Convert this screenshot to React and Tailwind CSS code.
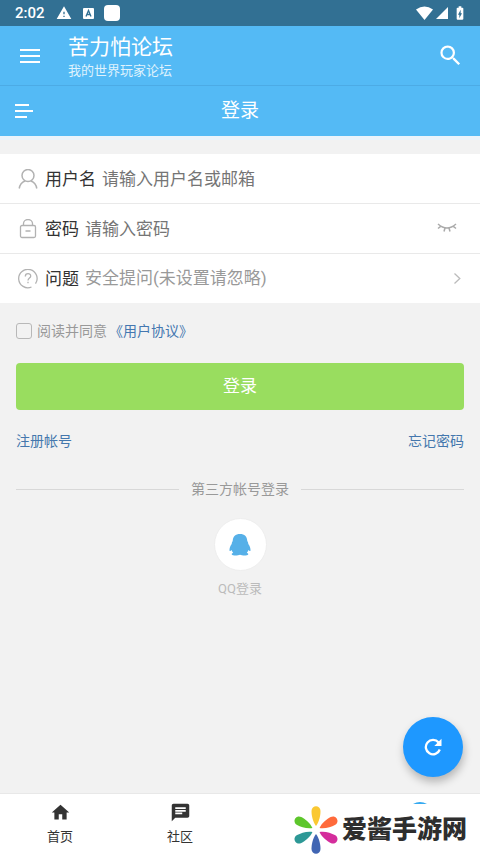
import React from "react";
import {
  MdWarning,
  MdSearch,
  MdHome,
  MdChat,
  MdBatteryChargingFull,
} from "react-icons/md";

function StatusBar() {
  return (
    <div className="flex h-[26px] items-center justify-between bg-[#327093] pr-3 pl-[15px] text-white">
      <div className="flex items-center">
        <span className="font-[Roboto,sans-serif] text-[15px] leading-6 font-medium">2:02</span>
        <MdWarning className="ml-[11px] size-4" />
        <svg className="ml-[11px] size-[11px]" viewBox="0 0 11 11" aria-hidden="true">
          <rect width="11" height="11" rx="1" fill="#fff" />
          <path d="M3 8.5 5.5 2.5 8 8.5M4 6.5H7" fill="none" stroke="#327093" strokeWidth="1.3" />
        </svg>
        <span className="ml-[10px] size-4 rounded-[4px] bg-white" />
      </div>
      <div className="flex items-center">
        <svg className="h-[14px] w-[17px]" viewBox="0 0 17 14" fill="currentColor" aria-hidden="true">
          <path d="M0 3.5Q8.500-2.500 17 3.500L8.500 14Z" />
        </svg>
        <svg className="ml-[3px] size-3" viewBox="0 0 12 12" fill="currentColor" aria-hidden="true">
          <path d="M12 0V12H0Z" />
        </svg>
        <MdBatteryChargingFull className="ml-1 size-4" />
      </div>
    </div>
  );
}

function Header() {
  return (
    <header className="flex h-[60px] items-center border-b border-[#4cabe5] bg-[#54baf5] px-5 text-white">
      <button type="button" aria-label="菜单" className="w-5">
        <svg className="h-4 w-5" viewBox="0 0 20 16" stroke="currentColor" strokeWidth="2" aria-hidden="true">
          <path d="M0 2H20M0 8H20M0 14H20" />
        </svg>
      </button>
      <div className="ml-7 flex-1 pt-1">
        <h1 className="text-[21px] leading-[26px]">苦力怕论坛</h1>
        <p className="text-[13px] leading-[22px] text-[#dff2fd]">我的世界玩家论坛</p>
      </div>
      <button type="button" aria-label="搜索" className="-mr-1">
        <MdSearch className="size-[27px]" />
      </button>
    </header>
  );
}

function TitleBar() {
  return (
    <div className="grid h-[54px] grid-cols-[1fr_auto_1fr] items-center border-b-4 border-[#eaf3fb] bg-[#54baf5] px-[15px] text-white">
      <button type="button" aria-label="分类" className="w-[18px]">
        <svg className="h-[14px] w-[18px]" viewBox="0 0 18 14" stroke="currentColor" strokeWidth="2" aria-hidden="true">
          <path d="M0 1H14M0 7H18M0 13H12" />
        </svg>
      </button>
      <h2 className="text-[19px] leading-6">登录</h2>
    </div>
  );
}

function UserIcon() {
  return (
    <svg viewBox="0 0 20 20" className="size-5" fill="none" stroke="#b2b2b2" strokeWidth="1.500" aria-hidden="true">
      <ellipse cx="10" cy="6.500" rx="6" ry="6" />
      <path d="M1.200 19.500C1.800 16 4 13.200 7 12M18.800 19.500C18.200 16 16 13.200 13 12" />
    </svg>
  );
}

function LockIcon() {
  return (
    <svg viewBox="0 0 20 20" className="size-5" fill="none" stroke="#b2b2b2" strokeWidth="1.300" aria-hidden="true">
      <rect x="2.500" y="6.500" width="15" height="12" rx="1.500" />
      <path d="M5.500 6.500V4.500a4.500 4 0 0 1 9 0V6.500M7.500 12H12.500" />
    </svg>
  );
}

function QuestionIcon() {
  return (
    <svg viewBox="0 0 20 20" className="size-5" fill="none" stroke="#b2b2b2" strokeWidth="1.300" aria-hidden="true">
      <path d="M13.500 18A9.200 9.200 0 1 1 17.500 14.700" />
      <path d="M7.300 7.400C7.300 3.700 12.900 3.900 12.700 7.200C12.600 9 10 9.200 10 11.500M10 12.700V14.200" />
    </svg>
  );
}

function FormRow({ icon, label, htmlFor, children }) {
  return (
    <div className="flex h-[50px] items-center border-b border-[#e9e9e9] bg-white px-[18px] last:border-[#f2f2f2]">
      {icon}
      <label htmlFor={htmlFor} className="ml-[7px] shrink-0 text-[17px] leading-6 text-[#333]">
        {label}
      </label>
      {children}
    </div>
  );
}

function LoginForm() {
  return (
    <form onSubmit={(e) => e.preventDefault()}>
      <div className="mt-[14px]">
        <FormRow icon={<UserIcon />} label="用户名" htmlFor="username">
          <input
            id="username"
            type="text"
            placeholder="请输入用户名或邮箱"
            className="ml-1.5 h-8 min-w-0 flex-1 text-[17px] outline-none placeholder:text-[#757575]"
          />
        </FormRow>
        <FormRow icon={<LockIcon />} label="密码" htmlFor="password">
          <input
            id="password"
            type="password"
            placeholder="请输入密码"
            className="ml-1.5 h-8 min-w-0 flex-1 text-[17px] outline-none placeholder:text-[#757575]"
          />
          <button type="button" aria-label="显示密码" className="mr-[5px]">
            <svg viewBox="0 0 20 12" className="h-3 w-5" fill="none" stroke="#aaa" strokeWidth="1.500" aria-hidden="true">
              <path d="M1 1Q10 9 19 1M4 3.200 1 5.500M8 5 7 8.500M12 5 13 8.500M16 3.200 19 5.500" />
            </svg>
          </button>
        </FormRow>
        <FormRow icon={<QuestionIcon />} label="问题" htmlFor="question">
          <select
            id="question"
            className="ml-1.5 h-8 min-w-0 flex-1 appearance-none bg-transparent text-[17px] text-[#999] outline-none"
          >
            <option>安全提问(未设置请忽略)</option>
          </select>
          <svg viewBox="0 0 8 12" className="mr-px h-3 w-2" fill="none" stroke="#bbb" strokeWidth="1.300" aria-hidden="true">
            <path d="M1.500 .5 6.800 5.500 1.500 10.500" />
          </svg>
        </FormRow>
      </div>

      <div className="px-4">
        <div className="mt-4 flex h-[22px] items-center text-[14px] leading-[22px] text-[#999]">
          <input
            id="agree"
            type="checkbox"
            className="mr-[5px] size-4 appearance-none rounded-[3px] border border-[#b8b8b8] checked:bg-[#54baf5]"
          />
          <label htmlFor="agree">阅读并同意</label>
          <a href="#terms" className="ml-0.5 text-[#4477b0]">《用户协议》</a>
        </div>
        <button
          type="submit"
          className="mt-[21px] h-[47px] w-full rounded-[4px] bg-[#99dd5f] text-[17px] text-white"
        >
          登录
        </button>
        <div className="mt-5 flex justify-between text-[14px] leading-[22px] text-[#4477ad]">
          <a href="#register">注册帐号</a>
          <a href="#forgot">忘记密码</a>
        </div>
      </div>
    </form>
  );
}

function ThirdParty() {
  return (
    <section className="mt-[26px] flex flex-col items-center px-4">
      <div className="flex w-full items-center gap-3 text-[14px] leading-[22px] text-[#999]">
        <span className="h-px flex-1 bg-[#d8d8d8]" />
        <h3>第三方帐号登录</h3>
        <span className="h-px flex-1 bg-[#d8d8d8]" />
      </div>
      <a href="#qq" className="mt-[18px] flex flex-col items-center text-[13px] leading-5 text-[#bbb]">
        <span className="flex size-[53px] items-center justify-center rounded-full border border-[#eee] bg-white">
          <svg viewBox="0 0 22 22" className="size-[22px]" fill="#56b0e8" aria-hidden="true">
            <path d="M11 0C6.500 0 3.900 2.400 3.700 7C3 8 2.700 9 2.700 10C1.200 12 .3 14.500 .5 16.500C.8 17.600 1.700 17 2.600 16C2.900 17 3.400 17.900 4.200 18.700C3 19.200 2.500 19.900 2.800 20.500C3.500 22 9 21.800 11 20.800C13 21.800 18.500 22 19.200 20.500C19.500 19.900 19 19.200 17.800 18.700C18.600 17.900 19.100 17 19.400 16C20.300 17 21.200 17.600 21.500 16.500C21.700 14.500 20.800 12 19.300 10C19.300 9 19 8 18.300 7C18.100 2.400 15.500 0 11 0Z" />
          </svg>
        </span>
        <span className="mt-2">QQ登录</span>
      </a>
    </section>
  );
}

const PETAL = "M22 20C18.500 15.500 17.500 9 17.500 5C17.500-1.300 26.500-1.300 26.500 5C26.500 9 25.500 15.500 22 20Z";

function BrandLogo() {
  return (
    <svg viewBox="0 0 44 48" className="h-12 w-11 shrink-0" aria-hidden="true">
      <path d={PETAL} fill="#fac832" />
      <path d={PETAL} fill="#ff6a3b" transform="rotate(62 22 24)" />
      <path d={PETAL} fill="#d42d9c" transform="rotate(118 22 24)" />
      <path d={PETAL} fill="#4065b3" transform="rotate(180 22 24)" />
      <path d={PETAL} fill="#2d9896" transform="rotate(242 22 24)" />
      <path d={PETAL} fill="#5dc62b" transform="rotate(298 22 24)" />
    </svg>
  );
}

function BottomNav() {
  return (
    <nav className="grid h-[61px] grid-cols-4 border-t border-[#e8e8e8] bg-white text-[13px] leading-5 text-[#333]">
      <button type="button" className="flex flex-col items-center pt-2">
        <MdHome className="size-[21px]" />
        <span className="mt-1">首页</span>
      </button>
      <button type="button" className="flex flex-col items-center pt-2">
        <MdChat className="size-[21px]" />
        <span className="mt-1">社区</span>
      </button>
      <a href="#home" className="relative col-span-2 flex items-end justify-end pr-[13px]">
        <svg viewBox="0 0 14 2" className="absolute top-2 right-[53px] h-0.5 w-[14px]" fill="#35a9f0" aria-hidden="true">
          <path d="M0 2Q7-2 14 2Z" />
        </svg>
        <BrandLogo />
        <span className="mb-2 ml-1 text-[25px] leading-8 font-black whitespace-nowrap text-[#2e2e2e]">爱酱手游网</span>
      </a>
    </nav>
  );
}

export default function App() {
  return (
    <div className="flex min-h-screen flex-col bg-[#f2f2f2] font-[Roboto,'Noto_Sans_CJK_SC',sans-serif]">
      <StatusBar />
      <Header />
      <TitleBar />
      <main className="relative flex-1 pb-24">
        <LoginForm />
        <ThirdParty />
        <button
          type="button"
          aria-label="刷新"
          className="absolute right-[17px] bottom-4 flex size-[60px] items-center justify-center rounded-full bg-[#1e98ff] text-white shadow-[1px_5px_8px_rgba(0,0,0,0.25)]"
        >
          <svg viewBox="0 0 18 18" className="size-[18px]" aria-hidden="true">
            <path d="M14.600 4.500A7.200 7.200 0 1 0 15.800 11.500" fill="none" stroke="currentColor" strokeWidth="2.300" />
            <path d="M17.500 .8V8H10.300Z" fill="currentColor" />
          </svg>
        </button>
      </main>
      <BottomNav />
    </div>
  );
}
